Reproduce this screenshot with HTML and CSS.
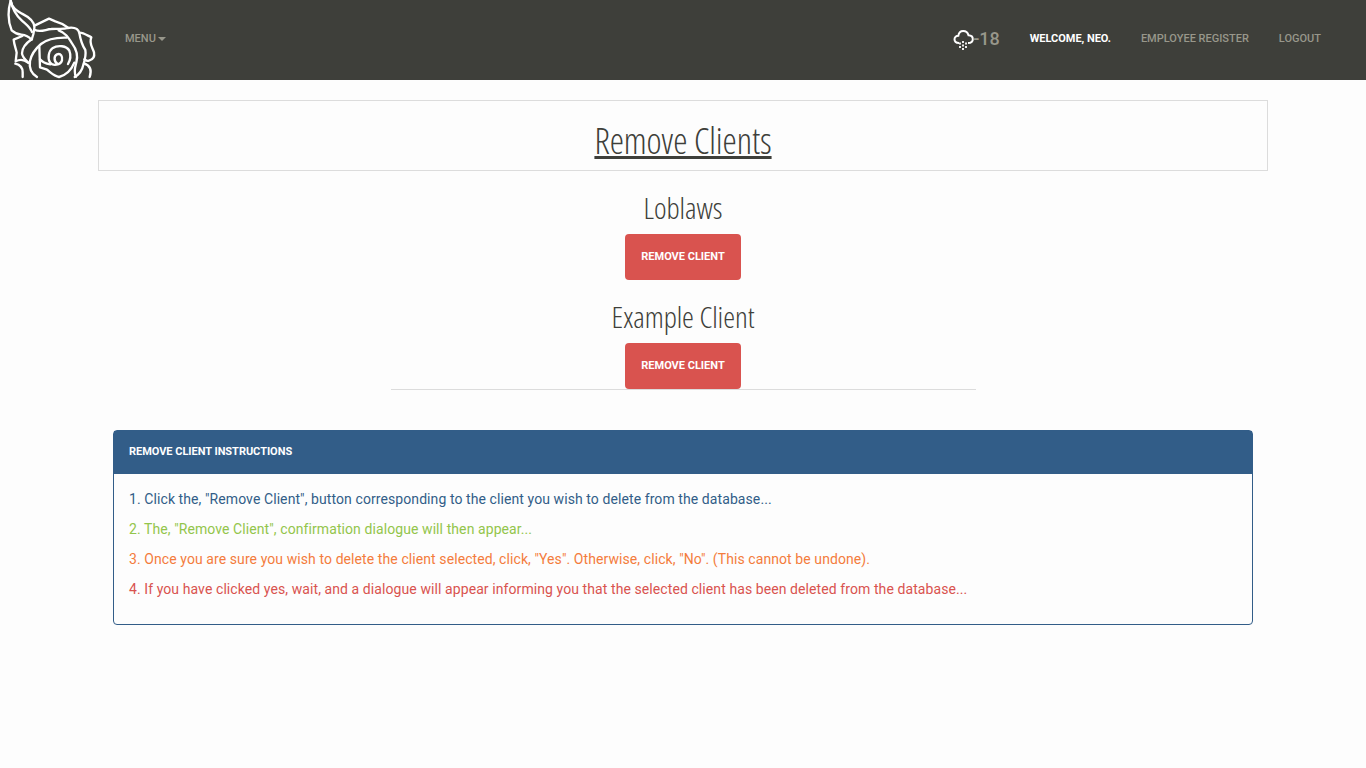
FILE: index.html
```html
<!DOCTYPE html>
<html lang="en">
<head>
<meta charset="utf-8">
<title>Remove Clients</title>
<link rel="stylesheet" href="styles.css">
</head>
<body>
<nav class="navbar">
  <svg class="logo" viewBox="0 0 330 240" fill="none" stroke="#fff" stroke-width="7" stroke-linecap="round" stroke-linejoin="round">
    <path d="M32 2C24 30 24 65 35 91C44 99 53 103 64 104C75 105 86 109 94 119"/>
    <path d="M32 2C36 24 50 32 66 41C86 51 105 66 103 84C102 98 99 109 95 119"/>
    <path d="M33 5C38 30 50 47 65 61C78 73 91 82 96 96"/>
    <path d="M105 76L147 56L166 64C180 68 193 74 203 82"/>
    <path d="M105 90C122 98 137 88 154 87C172 85 190 89 203 84C222 81 235 87 238 99C241 117 244 132 256 150C259 167 254 181 250 194C247 209 239 222 224 231"/>
    <path d="M96 117C80 128 66 143 66 160C66 171 76 180 86 189"/>
    <path d="M67 108L41 119C43 138 48 146 50 158L47 184C58 178 72 178 84 188"/>
    <path d="M46 191C59 194 68 203 68 217L68 231"/>
    <path d="M111 231C93 220 87 202 90 183C95 158 108 145 123 132C139 119 165 112 200 113"/>
    <path d="M176 91C196 98 205 112 216 130C232 151 234 169 229 187C225 202 220 216 228 230"/>
    <path d="M238 98C248 97 260 105 274 112C266 130 277 141 282 157C285 173 276 180 267 182C259 184 257 181 253 178"/>
    <path d="M252 190C270 196 276 210 269 231"/>
    <path d="M118 140L120 202L139 208C151 216 161 228 177 231C197 226 214 210 223 188"/>
    <path d="M120 178C128 188 138 191 151 193"/>
    <path d="M173 192C161 185 161 168 171 163C183 159 188 169 186 181C182 196 158 199 150 187C142 175 146 153 157 145C174 134 200 137 208 152C214 168 209 184 204 192"/>
  </svg>
  <a class="nav-link menu">MENU<span class="caret"></span></a>
  <div class="nav-right">
    <a class="nav-link weather"><svg class="cloud" viewBox="0 0 21 20" fill="none" stroke="#fff" stroke-width="2"><path d="M6 13C2.8 13 1.5 11.8 1.5 9.3C1.5 7.3 3.3 5.8 5.3 5.8C5.7 3 7.7 1.1 10.2 1.1C13 1.1 14.8 2.8 15.5 5.3C18.2 5.4 19.8 7 19.8 9.2C19.8 11.8 18.3 13 15 13"/><path d="M10 11v2M7 12.5v2M13 12.5v2M10 14.5v2M7 16v2M13 16v2M10 18v2" stroke-width="1.8"/></svg><span class="degrees">-18</span></a>
    <a class="nav-link welcome">WELCOME, NEO.</a>
    <a class="nav-link">EMPLOYEE REGISTER</a>
    <a class="nav-link">LOGOUT</a>
  </div>
</nav>
<main class="container">
  <header class="title-box"><h1>Remove Clients</h1></header>
  <section class="clients">
    <h2>Loblaws</h2>
    <button class="btn">REMOVE CLIENT</button>
    <h2>Example Client</h2>
    <button class="btn">REMOVE CLIENT</button>
  </section>
  <section class="panel">
    <h3 class="panel-heading">REMOVE CLIENT INSTRUCTIONS</h3>
    <div class="panel-body">
      <p class="primary">1. Click the, "Remove Client", button corresponding to the client you wish to delete from the database...</p>
      <p class="success">2. The, "Remove Client", confirmation dialogue will then appear...</p>
      <p class="warning">3. Once you are sure you wish to delete the client selected, click, "Yes". Otherwise, click, "No". (This cannot be undone).</p>
      <p class="danger">4. If you have clicked yes, wait, and a dialogue will appear informing you that the selected client has been deleted from the database...</p>
    </div>
  </section>
</main>
</body>
</html>
```
FILE: styles.css
```css
* { box-sizing: border-box; }
body { margin: 0; background: #fdfdfd; color: #3e3f3a; font: 14px/20px Roboto, sans-serif; }
.navbar { display: flex; height: 80px; background: #3e3f3a; }
.logo { width: 110px; height: 80px; flex: none; }
.nav-link { padding: 29px 15px; color: #98978b; font-size: 11px; font-weight: 500; line-height: 20px; white-space: nowrap; }
.caret { display: inline-block; margin-left: 2px; vertical-align: middle; border-top: 4px solid; border-left: 4px solid transparent; border-right: 4px solid transparent; }
.nav-right { display: flex; margin-left: auto; margin-right: 30px; }
.weather { display: flex; padding-top: 28px; }
.cloud { width: 21px; height: 20px; margin: 2px -1px 0 1px; }
.degrees { font-size: 18px; font-weight: 500; line-height: 22px; }
.welcome { color: #fff; font-weight: 700; letter-spacing: -.03px; }
.container { width: 1170px; margin: 20px auto 0; }
.title-box { height: 71px; border: 1px solid #dcdcdc; text-align: center; padding-top: 20px; }
h1, h2 { margin: 0; font-family: "Open Sans", sans-serif; font-weight: 300; font-stretch: 75%; letter-spacing: -.07px; }
h1 { font-size: 36px; line-height: 40px; text-decoration: underline; text-decoration-thickness: 3px; }
h2 { font-size: 30px; line-height: 33px; margin-bottom: 10px; }
.clients { display: flex; flex-direction: column; align-items: center; width: 585px; margin: 20px auto 40px; border-bottom: 1px solid #dcdcdc; }
.btn { width: 116px; height: 46px; padding: 0; border: 0; border-radius: 4px; background: #d9534f; color: #fff; font: 700 11px/22px Roboto, sans-serif; }
.btn + h2 { margin-top: 20px; }
.panel { margin: 0 15px; height: 195px; border: 1px solid #325d88; border-radius: 4px; }
.panel-heading { margin: 0; height: 43px; padding: 11px 15px; background: #325d88; color: #fff; font-size: 11px; line-height: 20px; font-weight: 700; letter-spacing: -.03px; }
.panel-body { padding: 15px; }
.panel-body p { margin: 0 0 10px; letter-spacing: .085px; }
.primary { color: #325d88; }
.success { color: #93c54b; }
.warning { color: #f47c3c; }
.danger { color: #d9534f; }
```
